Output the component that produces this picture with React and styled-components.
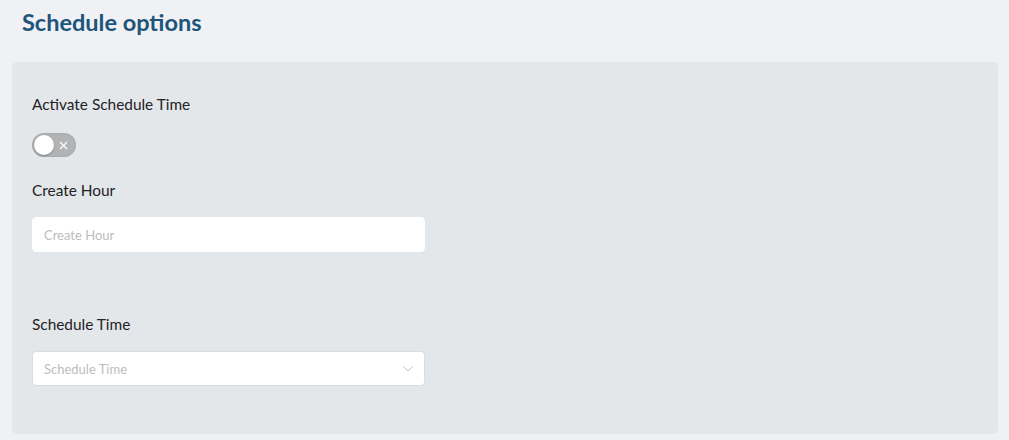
import React from 'react';
import styled, { createGlobalStyle } from 'styled-components';

const GlobalStyle = createGlobalStyle`
  html, body {
    margin: 0;
    padding: 0;
    background: #eff1f5;
    font-family: Lato, "Open Sans", sans-serif;
  }
  * { box-sizing: border-box; }
`;

const Page = styled.div`
  width: 1009px;
  height: 440px;
  padding: 6px 11px 6px 12px;
  background: #eff1f5;
  overflow: hidden;
`;

const Title = styled.h2`
  margin: 0 0 0 10px;
  height: 56px;
  font-size: 23.5px;
  font-weight: 700;
  line-height: 33px;
  color: #1e5479;
`;

const Panel = styled.section`
  background: #e4e7ea;
  border-radius: 5px;
  height: 372px;
  padding: 28px 20px;
  display: flex;
  flex-direction: column;
`;

const Label = styled.label`
  display: block;
  font-size: 15.4px;
  color: #1f2226;
  line-height: 28px;
  margin-bottom: ${(p) => p.$gap || 12}px;
`;

const Switch = styled.div`
  position: relative;
  width: 44px;
  height: 24px;
  border-radius: 12px;
  background: #b1b3b5;
  margin-bottom: 19px;
  box-shadow: inset 0 0 2px rgba(0, 0, 0, 0.15);
`;

const Knob = styled.span`
  position: absolute;
  left: 2px;
  top: 2px;
  width: 20px;
  height: 20px;
  border-radius: 50%;
  background: #fff;
  box-shadow: 0 1px 2px rgba(0, 0, 0, 0.25);
`;

const Cross = styled.svg`
  position: absolute;
  left: 27px;
  top: 8px;
`;

const Field = styled.div`
  position: relative;
  width: 393px;
  height: 35px;
  background: #fff;
  border: 1px solid ${(p) => (p.$bordered ? '#dadcdf' : '#fff')};
  border-radius: 4px;
  display: flex;
  align-items: center;
  padding: 0 11px;
  margin-bottom: ${(p) => p.$gap || 0}px;
`;

const Placeholder = styled.span`
  font-size: 13px;
  color: #bdbdbd;
  flex: 1;
`;

function Chevron() {
  return (
    <svg width="10" height="6" viewBox="0 0 10 6">
      <path d="M0.5 0.5 L5 5 L9.5 0.5" fill="none" stroke="#c4c4c4" strokeWidth="1" />
    </svg>
  );
}

export default function App() {
  return (
    <>
      <GlobalStyle />
      <Page>
        <Title>Schedule options</Title>
        <Panel>
          <Label $gap={15}>Activate Schedule Time</Label>
          <Switch>
            <Knob />
            <Cross width="9" height="9" viewBox="0 0 9 9">
              <path d="M1 1 L8 8 M8 1 L1 8" stroke="#fff" strokeWidth="1.2" />
            </Cross>
          </Switch>
          <Label $gap={13}>Create Hour</Label>
          <Field $gap={58}>
            <Placeholder>Create Hour</Placeholder>
          </Field>
          <Label $gap={13}>Schedule Time</Label>
          <Field $bordered>
            <Placeholder>Schedule Time</Placeholder>
            <Chevron />
          </Field>
        </Panel>
      </Page>
    </>
  );
}
